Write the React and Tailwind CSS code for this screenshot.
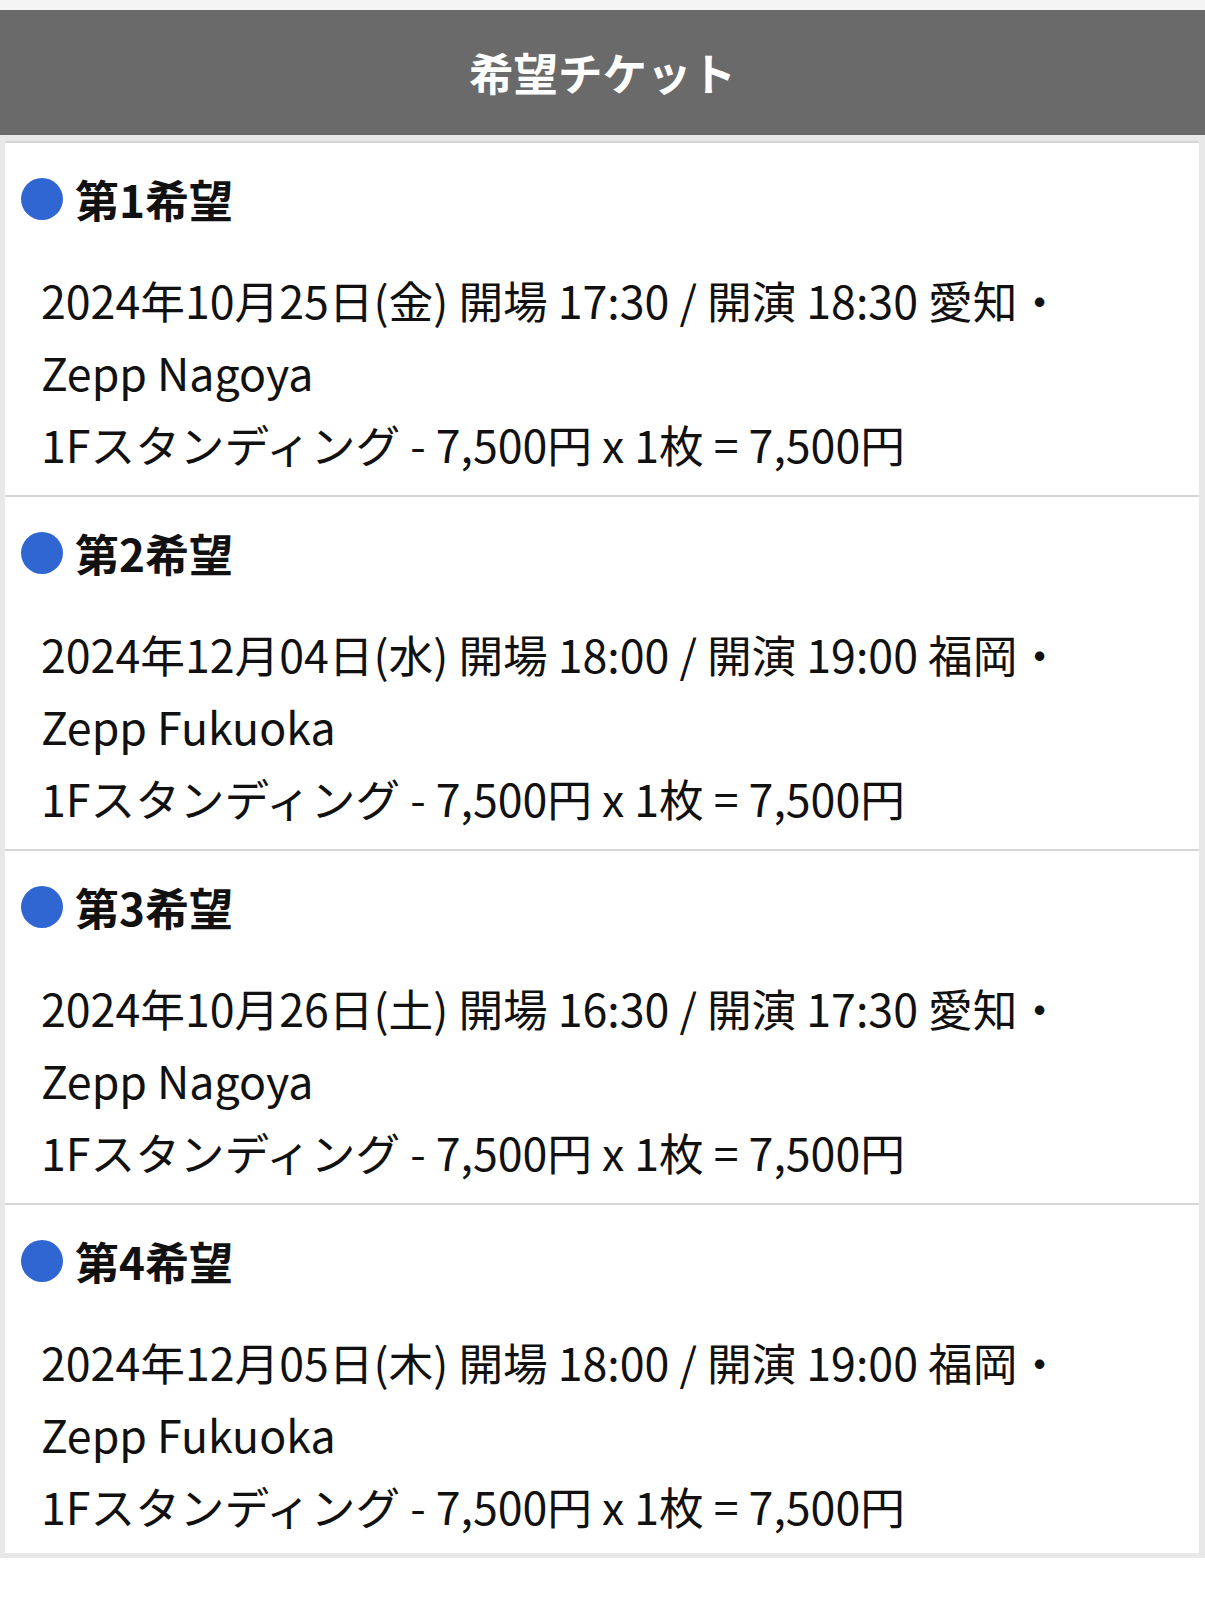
import React from "react";

const items = [
  {
    no: 1,
    line1: "2024年10月25日(金) 開場 17:30 / 開演 18:30 愛知・",
    line2: "Zepp Nagoya",
  },
  {
    no: 2,
    line1: "2024年12月04日(水) 開場 18:00 / 開演 19:00 福岡・",
    line2: "Zepp Fukuoka",
  },
  {
    no: 3,
    line1: "2024年10月26日(土) 開場 16:30 / 開演 17:30 愛知・",
    line2: "Zepp Nagoya",
  },
  {
    no: 4,
    line1: "2024年12月05日(木) 開場 18:00 / 開演 19:00 福岡・",
    line2: "Zepp Fukuoka",
  },
];

export default function App() {
  return (
    <div
      className="w-[1205px] bg-white"
      style={{ fontFamily: '"Noto Sans CJK JP", "Noto Sans", sans-serif' }}
    >
      <div className="h-[10px] bg-[#f4f4f4]" />
      <div className="h-[125px] bg-[#6a6a6a] flex items-center justify-center">
        <span className="text-white font-bold text-[44.5px] leading-none">希望チケット</span>
      </div>
      <div className="border-l-[5px] border-r-[6px] border-t-[6px] border-b-[5px] border-[#e8e8e8]">
        {items.map((it) => (
          <div
            key={it.no}
            className="border-t-2 border-[#d6d6d6] pt-[23px] pb-[15px] last:pb-[11px]"
          >
            <div className="flex items-center pl-[16px] h-[66px]">
              <div className="w-[42px] h-[42px] rounded-full bg-[#3066d2] shrink-0" />
              <span className="ml-[12px] font-bold text-[44px] leading-none text-[#111]">
                第{it.no}希望
              </span>
            </div>
            <div className="mt-[32px] pl-[36px] text-[44.7px] leading-[72px] text-[#111] whitespace-nowrap">
              <div>{it.line1}</div>
              <div>{it.line2}</div>
              <div>1Fスタンディング - 7,500円 x 1枚 = 7,500円</div>
            </div>
          </div>
        ))}
      </div>
    </div>
  );
}
